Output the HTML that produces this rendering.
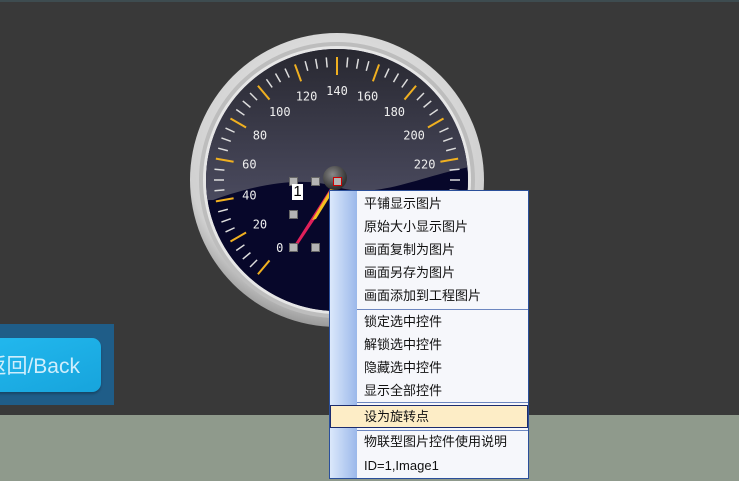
<!DOCTYPE html>
<html><head><meta charset="utf-8"><style>
body{margin:0;width:739px;height:481px;overflow:hidden;background:#393939;position:relative;font-family:"Liberation Sans","Noto Sans CJK SC",sans-serif}
.top{position:absolute;left:0;top:0;width:739px;height:2px;background:#3e4c50}
.floor{position:absolute;left:0;top:415px;width:739px;height:66px;background:#8f9a8c}
.panel{position:absolute;left:0;top:324px;width:114px;height:81px;background:#1f5d88}
.btn{position:absolute;left:-10px;top:338px;width:111px;height:54px;border-radius:9px;background:linear-gradient(160deg,#22b8ee,#17a4dc);box-shadow:0 2px 2px rgba(0,0,0,.25)}
.btn span{position:absolute;right:21px;top:12px;color:#cfeefc;font-size:21px;white-space:nowrap}
.menu{position:absolute;left:329px;top:190px;width:198px;height:287px;border:1px solid #2a4f9a;background:#f6f7fb}
.strip{position:absolute;left:0;top:0;width:27px;height:100%;background:linear-gradient(90deg,#dbe8fb,#9bb8ea)}
.it{position:absolute;left:34px;font-size:13px;color:#111;line-height:16px;white-space:nowrap}
.sep{position:absolute;left:27px;right:0;height:1px;background:#6d87c0}
.hl{position:absolute;left:0;top:214px;width:196px;height:21px;border:1px solid #1c2c6e;background:#fdedc6}
.h{position:absolute;width:7px;height:7px;background:#b4b4b4;border:1px solid #666}
</style></head><body>
<div class="top"></div>
<div class="floor"></div>
<svg width="739" height="481" style="position:absolute;left:0;top:0">
<defs>
<radialGradient id="rim" cx="50%" cy="40%" r="60%"><stop offset="0" stop-color="#f4f4f4"/><stop offset=".85" stop-color="#d0d0d0"/><stop offset="1" stop-color="#999"/></radialGradient>
<linearGradient id="up" x1="0" y1="0" x2="0" y2="1"><stop offset="0" stop-color="#26262e"/><stop offset="1" stop-color="#4a4a5e"/></linearGradient>
<radialGradient id="hub" cx="40%" cy="35%" r="60%"><stop offset="0" stop-color="#888"/><stop offset="1" stop-color="#333"/></radialGradient>
<clipPath id="fc"><circle cx="337" cy="180" r="131"/></clipPath>
</defs>
<circle cx="337" cy="180" r="147" fill="url(#rim)"/>
<circle cx="337" cy="180" r="138" fill="#bdbdbd"/>
<circle cx="337" cy="180" r="134" fill="#e6e6e6"/>
<circle cx="337" cy="180" r="131" fill="#0a0a2e"/>
<g clip-path="url(#fc)">
<rect x="200" y="40" width="280" height="160" fill="url(#up)"/>
<path d="M200 205 C250 185 300 175 337 187 C380 200 420 175 480 165 L480 330 L200 330Z" fill="#07072a"/>
</g>
<g id="ticks"></g>
<g font-family="DejaVu Sans Mono,Liberation Mono,monospace" font-size="12" fill="#eee" text-anchor="middle" id="labs"></g>
<polygon points="335,181 293,247 297,246 339,183" fill="#e0205a"/>
<polygon points="336,180 312,220 316,219 339,182" fill="#f2c020"/>
<circle cx="335" cy="178" r="12" fill="url(#hub)"/>
</svg>
<div class="h" style="left:289px;top:177px"></div>
<div class="h" style="left:311px;top:177px"></div>
<div class="h" style="left:333px;top:177px;border-color:#c00"></div>
<div class="h" style="left:289px;top:210px"></div>
<div class="h" style="left:289px;top:243px"></div>
<div class="h" style="left:311px;top:243px"></div>
<div style="position:absolute;left:292px;top:184px;width:11px;height:16px;background:#fff;color:#000;font-size:15px;line-height:16px;text-align:center">1</div>
<div class="panel"></div>
<div class="btn"><span>返回/Back</span></div>
<div class="menu">
<div class="strip"></div>
<div class="it" style="top:5px">平铺显示图片</div>
<div class="it" style="top:28px">原始大小显示图片</div>
<div class="it" style="top:51px">画面复制为图片</div>
<div class="it" style="top:74px">画面另存为图片</div>
<div class="it" style="top:97px">画面添加到工程图片</div>
<div class="sep" style="top:118px"></div>
<div class="it" style="top:123px">锁定选中控件</div>
<div class="it" style="top:146px">解锁选中控件</div>
<div class="it" style="top:169px">隐藏选中控件</div>
<div class="it" style="top:192px">显示全部控件</div>
<div class="sep" style="top:211px"></div>
<div class="hl"></div>
<div class="it" style="top:218px">设为旋转点</div>
<div class="sep" style="top:239px"></div>
<div class="it" style="top:243px">物联型图片控件使用说明</div>
<div class="it" style="top:267px">ID=1,Image1</div>
</div>
<script>
var t=document.getElementById('ticks'),l=document.getElementById('labs'),s='',q='';
for(var v=0;v<=250;v+=5){var a=(v-140)*Math.PI/180,sx=Math.sin(a),cy=-Math.cos(a);
var maj=v%20==0,r1=123,r2=maj?105:113;
s+='<line x1="'+(337+sx*r1)+'" y1="'+(180+cy*r1)+'" x2="'+(337+sx*r2)+'" y2="'+(180+cy*r2)+'" stroke="'+(maj?'#f0b020':'#ddd')+'" stroke-width="'+(maj?2:1.5)+'"/>';
if(maj&&v<=220){var rr=89;q+='<text x="'+(337+sx*rr)+'" y="'+(184+cy*rr)+'">'+v+'</text>';}}
t.innerHTML=s;l.innerHTML=q;
</script>
</body></html>
